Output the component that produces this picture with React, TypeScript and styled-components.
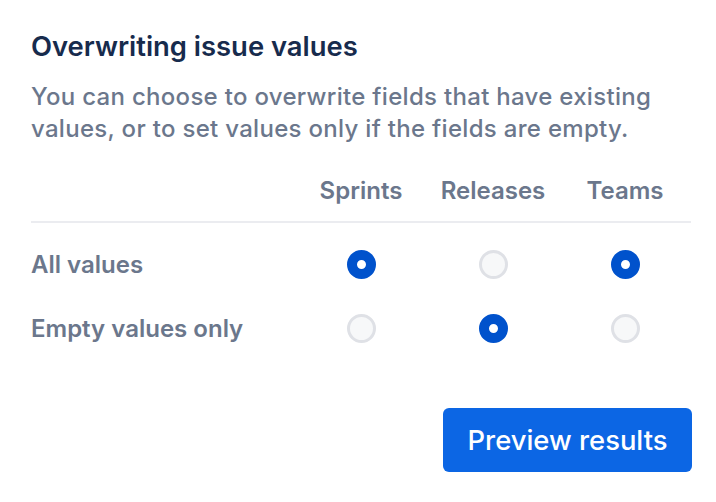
import React from 'react';
import styled, { createGlobalStyle } from 'styled-components';

const GlobalStyle = createGlobalStyle`
  body {
    margin: 0;
    background: #ffffff;
    font-family: Inter, "Noto Sans", sans-serif;
  }
`;

const Panel = styled.div`
  width: 716px;
  height: 502px;
  box-sizing: border-box;
  padding: 28px 24px 0 31px;
  display: flex;
  flex-direction: column;
`;

const Title = styled.h2`
  margin: 0;
  font-size: 27.4px;
  line-height: 36px;
  font-weight: 600;
  color: #172b4d;
`;

const Description = styled.p`
  margin: 17px 0 0;
  font-size: 24px;
  line-height: 32px;
  font-weight: 500;
  letter-spacing: 0.3px;
  color: #6b778c;
`;

const Table = styled.div`
  margin-top: 22px;
  display: grid;
  grid-template-columns: 264px repeat(3, 132px);
`;

const HeaderCell = styled.div`
  height: 56px;
  box-sizing: border-box;
  padding-bottom: 8px;
  display: flex;
  align-items: center;
  justify-content: center;
  font-size: 24px;
  font-weight: 600;
  color: #6b778c;
  border-bottom: 2px solid #ebecf0;
`;

const RowLabel = styled.div<{ $first?: boolean }>`
  height: 64px;
  margin-top: ${(p) => (p.$first ? '9px' : '0')};
  display: flex;
  align-items: center;
  font-size: 24px;
  font-weight: 600;
  color: #6b778c;
`;

const RadioCell = styled.div<{ $first?: boolean }>`
  height: 64px;
  margin-top: ${(p) => (p.$first ? '9px' : '0')};
  display: flex;
  align-items: center;
  justify-content: center;
`;

const Radio = styled.span<{ $checked?: boolean }>`
  width: 29px;
  height: 29px;
  box-sizing: border-box;
  border-radius: 50%;
  background: ${(p) => (p.$checked ? '#ffffff' : '#f7f8f9')};
  border: ${(p) => (p.$checked ? '10.5px solid #0052cc' : '3px solid #dfe1e6')};
`;

const Footer = styled.div`
  margin-top: 48px;
  display: flex;
  justify-content: flex-end;
`;

const PrimaryButton = styled.button`
  width: 249px;
  height: 64px;
  border: none;
  border-radius: 6px;
  background: #0c66e4;
  color: #ffffff;
  font-family: Inter, "Noto Sans", sans-serif;
  font-size: 27.4px;
  font-weight: 500;
  cursor: pointer;
`;

const columns = ['Sprints', 'Releases', 'Teams'];

const rows = [
  { label: 'All values', checked: [true, false, true] },
  { label: 'Empty values only', checked: [false, true, false] }
];

const App = () => {
  return (
    <>
      <GlobalStyle />
      <Panel>
        <Title>Overwriting issue values</Title>
        <Description>
          You can choose to overwrite fields that have existing values, or to set values only if
          the fields are empty.
        </Description>
        <Table>
          <HeaderCell />
          {columns.map((c) => (
            <HeaderCell key={c}>{c}</HeaderCell>
          ))}
          {rows.map((row, i) => (
            <React.Fragment key={row.label}>
              <RowLabel $first={i === 0}>{row.label}</RowLabel>
              {row.checked.map((on, j) => (
                <RadioCell key={j} $first={i === 0}>
                  <Radio $checked={on} />
                </RadioCell>
              ))}
            </React.Fragment>
          ))}
        </Table>
        <Footer>
          <PrimaryButton>Preview results</PrimaryButton>
        </Footer>
      </Panel>
    </>
  );
};

export default App;
